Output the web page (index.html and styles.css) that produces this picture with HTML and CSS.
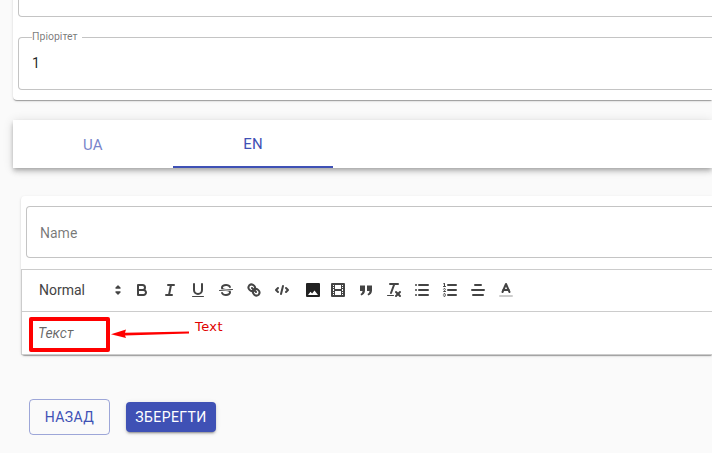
FILE: index.html
```html
<!DOCTYPE html>
<html lang="en">
<head>
  <meta charset="UTF-8" />
  <title>Edit</title>
  <link rel="stylesheet" href="styles.css">
</head>
<body>
  <main class="page">

    <section class="card top-card">
      <fieldset class="field field-cut"><legend class="no-label"></legend></fieldset>
      <fieldset class="field field-priority">
        <legend>Пріорітет</legend>
        <span class="field-value">1</span>
      </fieldset>
    </section>

    <nav class="tabs">
      <a class="tab">UA</a>
      <a class="tab active">EN</a>
    </nav>

    <section class="card editor-card">
      <div class="name-field">Name</div>

      <div class="toolbar">
        <div class="picker">
          <span>Normal</span>
          <svg class="picker-arrows" viewBox="0 0 18 18"><polygon points="7 11 9 13 11 11 7 11"/><polygon points="7 7 9 5 11 7 7 7"/></svg>
        </div>
        <button class="tool"><svg viewBox="0 0 18 18"><path class="st" d="M5,4H9.5A2.5,2.5,0,0,1,12,6.5v0A2.5,2.5,0,0,1,9.5,9H5A0,0,0,0,1,5,9V4A0,0,0,0,1,5,4Z"/><path class="st" d="M5,9h5.5A2.5,2.5,0,0,1,13,11.5v0A2.5,2.5,0,0,1,10.5,14H5a0,0,0,0,1,0,0V9A0,0,0,0,1,5,9Z"/></svg></button>
        <button class="tool"><svg viewBox="0 0 18 18"><line class="st" x1="7" x2="13" y1="4" y2="4"/><line class="st" x1="5" x2="11" y1="14" y2="14"/><line class="st" x1="8" x2="10" y1="14" y2="4"/></svg></button>
        <button class="tool"><svg viewBox="0 0 18 18"><path class="st" d="M5,3V9a4.012,4.012,0,0,0,4,4H9a4.012,4.012,0,0,0,4-4V3"/><rect class="fl" height="1" rx=".5" ry=".5" width="12" x="3" y="15"/></svg></button>
        <button class="tool"><svg viewBox="0 0 18 18"><line class="st thin" x1="15.5" x2="2.5" y1="8.5" y2="9.5"/><path class="fl" d="M9.007,8C6.542,7.791,6,7.519,6,6.5,6,5.792,7.283,5,9,5c1.571,0,2.765.679,2.969,1.309a1,1,0,0,0,1.9-.617C13.356,4.106,11.354,3,9,3,6.2,3,4,4.538,4,6.5a3.2,3.2,0,0,0,.5,1.843Z"/><path class="fl" d="M8.984,10C11.457,10.208,12,10.479,12,11.5c0,.708-1.283,1.5-3,1.5-1.571,0-2.765-.679-2.969-1.309a1,1,0,1,0-1.9.617C4.644,13.894,6.646,15,9,15c2.8,0,5-1.538,5-3.5a3.2,3.2,0,0,0-.5-1.843Z"/></svg></button>
        <button class="tool"><svg viewBox="0 0 18 18"><line class="st" x1="7" x2="11" y1="7" y2="11"/><path class="st" d="M8.9,4.577a3.476,3.476,0,0,1,.36,4.679A3.476,3.476,0,0,1,4.577,8.9C3.185,7.5,2.634,6.319,4.287,4.287,6.319,2.634,7.5,3.185,8.9,4.577Z"/><path class="st" d="M13.423,9.1a3.476,3.476,0,0,0-4.679-.36,3.476,3.476,0,0,0,.36,4.679c1.392,1.392,2.5,1.954,4.557.3C15.323,11.615,14.815,10.5,13.423,9.1Z"/></svg></button>
        <button class="tool"><svg viewBox="0 0 18 18"><polyline class="st" points="5 7 3 9 5 11"/><polyline class="st" points="13 7 15 9 13 11"/><line class="st" x1="10" x2="8" y1="5" y2="13"/></svg></button>
        <button class="tool tool-image"><svg viewBox="0 0 18 18"><path class="fl-dark" d="M3,2H15a1,1,0,0,1,1,1V15a1,1,0,0,1-1,1H3a1,1,0,0,1-1-1V3A1,1,0,0,1,3,2Z"/><path class="fl-white" d="M4,14l2.5-3.2,1.6,1.7L10.5,9.6,14,14Z"/></svg></button>
        <button class="tool tool-video"><svg viewBox="0 0 18 18"><rect class="st" height="12" width="12" x="3" y="3"/><rect class="fl" height="12" width="1" x="5" y="3"/><rect class="fl" height="12" width="1" x="12" y="3"/><rect class="fl" height="2" width="8" x="5" y="8"/><rect class="fl" height="1" width="3" x="3" y="5"/><rect class="fl" height="1" width="3" x="3" y="7"/><rect class="fl" height="1" width="3" x="3" y="10"/><rect class="fl" height="1" width="3" x="3" y="12"/><rect class="fl" height="1" width="3" x="12" y="5"/><rect class="fl" height="1" width="3" x="12" y="7"/><rect class="fl" height="1" width="3" x="12" y="10"/><rect class="fl" height="1" width="3" x="12" y="12"/></svg></button>
        <button class="tool"><svg viewBox="0 0 18 18"><path class="fl" d="M3,4.5H8V9.5C8,12,6.5,13.8,4.2,14.5L3.5,13C4.8,12.4,5.4,11.5,5.5,10H3Z"/><path class="fl" d="M10,4.5H15V9.5C15,12,13.5,13.8,11.2,14.5L10.5,13C11.8,12.4,12.4,11.5,12.5,10H10Z"/></svg></button>
        <button class="tool"><svg viewBox="0 0 18 18"><line class="st" x1="5" x2="13" y1="3" y2="3"/><line class="st" x1="6" x2="9.35" y1="12" y2="3"/><line class="st" x1="11" x2="15" y1="11" y2="15"/><line class="st" x1="15" x2="11" y1="11" y2="15"/><rect class="fl" height="1" rx="0.5" ry="0.5" width="7" x="2" y="14"/></svg></button>
        <button class="tool"><svg viewBox="0 0 18 18"><line class="st" x1="6" x2="15" y1="4" y2="4"/><line class="st" x1="6" x2="15" y1="9" y2="9"/><line class="st" x1="6" x2="15" y1="14" y2="14"/><line class="st" x1="3" x2="3" y1="4" y2="4"/><line class="st" x1="3" x2="3" y1="9" y2="9"/><line class="st" x1="3" x2="3" y1="14" y2="14"/></svg></button>
        <button class="tool"><svg viewBox="0 0 18 18"><line class="st" x1="7" x2="15" y1="4" y2="4"/><line class="st" x1="7" x2="15" y1="9" y2="9"/><line class="st" x1="7" x2="15" y1="14" y2="14"/><line class="st thin" x1="2.5" x2="4.5" y1="5.5" y2="5.5"/><path class="fl" d="M3.5,6A0.5,0.5,0,0,1,3,5.5V3.085l-0.276.138A0.5,0.5,0,0,1,2.053,3c-0.124-.247-0.023-0.324.224-0.447l1-.5A0.5,0.5,0,0,1,4,2.5v3A0.5,0.5,0,0,1,3.5,6Z"/><path class="st thin" d="M4.5,10.5h-2c0-.234,1.85-1.076,1.85-2.234A0.959,0.959,0,0,0,2.5,8.156"/><path class="st thin" d="M2.5,14.846a0.959,0.959,0,0,0,1.85-.109A0.7,0.7,0,0,0,3.75,14a0.688,0.688,0,0,0,.6-0.736,0.959,0.959,0,0,0-1.85-.109"/></svg></button>
        <button class="tool"><svg viewBox="0 0 18 18"><line class="st" x1="15" x2="3" y1="9" y2="9"/><line class="st" x1="14" x2="4" y1="14" y2="14"/><line class="st" x1="12" x2="6" y1="4" y2="4"/></svg></button>
        <button class="tool"><svg viewBox="0 0 18 18"><line class="color-label" x1="3" x2="15" y1="15" y2="15"/><polyline class="st" points="5.5 11 9 3 12.5 11"/><line class="st" x1="11.63" x2="6.38" y1="9" y2="9"/></svg></button>
      </div>

      <div class="editor-body">
        <em class="placeholder">Текст</em>
        <!-- red annotation drawn over the screenshot -->
        <div class="mark-box"></div>
        <svg class="mark-arrow" viewBox="0 0 80 10"><polygon points="1,6.2 16,1.6 15,4.8 79,3.4 79,5.6 15,7.4 16,10"/></svg>
        <span class="mark-text">Text</span>
      </div>
    </section>

    <div class="actions">
      <button class="btn btn-outline">Назад</button>
      <button class="btn btn-primary">Зберегти</button>
    </div>

  </main>
</body>
</html>
```

FILE: styles.css
```css
* {
  box-sizing: border-box;
}
html, body {
  height: 453px;
  overflow: hidden;
}
body {
  margin: 0;
  font-family: Roboto, sans-serif;
  font-size: 14px;
  background-color: #fafafa;
  color: rgba(0, 0, 0, 0.87);
}

/* Cards run out of the window on the right, so nothing closes them there */
.page {
  margin-left: 13px;
}

/* Cards */
.card {
  background-color: #fff;
  border-radius: 4px 0 0 4px;
  box-shadow: 0 2px 1px -1px rgba(0, 0, 0, 0.2), 0 1px 1px 0 rgba(0, 0, 0, 0.14), 0 1px 3px 0 rgba(0, 0, 0, 0.12);
}

/* Top card is cut by the top of the window */
.top-card {
  margin-top: -39px;
  padding: 0 0 10px 5px;
}
.field {
  margin: 0;
  padding: 0 13px;
  border: 1px solid rgba(0, 0, 0, 0.23);
  border-right: none;
  border-radius: 4px 0 0 4px;
  min-width: 0;
}
.field-cut {
  height: 56px;
  margin-bottom: 14px;
}
.no-label {
  padding: 0;
  height: 0;
}
.field-priority {
  height: 59px;
  display: block;
}
.field-priority legend {
  padding: 0 4px 0 0;
  font-size: 10.5px;
  line-height: 12px;
  color: rgba(0, 0, 0, 0.54);
}
.field-value {
  display: block;
  line-height: 16px;
  margin-top: 12px;
}

/* Tabs */
.tabs {
  display: flex;
  height: 48px;
  margin-top: 20px;
  background-color: #fff;
  box-shadow: 0 2px 4px -1px rgba(0, 0, 0, 0.2), 0 4px 5px 0 rgba(0, 0, 0, 0.14), 0 1px 10px 0 rgba(0, 0, 0, 0.12);
}
.tab {
  width: 160px;
  padding-top: 1px;
  display: flex;
  align-items: center;
  justify-content: center;
  color: #3f51b5;
  opacity: 0.7;
  font-size: 15px;
  letter-spacing: 0.2px;
}
.tab.active {
  opacity: 1;
  border-bottom: 2px solid #3f51b5;
}

/* Editor */
.editor-card {
  margin: 28px 0 0 8px;
  padding-top: 10px;
}
.name-field {
  margin-left: 5px;
  height: 52px;
  padding: 1px 0 0 13px;
  display: flex;
  align-items: center;
  border: 1px solid rgba(0, 0, 0, 0.23);
  border-right: none;
  border-radius: 4px 0 0 4px;
  color: rgba(0, 0, 0, 0.54);
}
.toolbar {
  display: flex;
  align-items: center;
  height: 43px;
  margin-top: 11px;
  padding: 0 0 1px 8px;
  border: 1px solid #ccc;
  border-right: none;
}
.picker {
  width: 98px;
  height: 24px;
  padding: 0 1px 0 9px;
  display: flex;
  align-items: center;
  justify-content: space-between;
  color: #444;
}
.picker-arrows {
  width: 18px;
  height: 18px;
  fill: #444;
  stroke: #444;
  stroke-width: 1.4;
  stroke-linejoin: round;
}
.tool {
  width: 28px;
  height: 24px;
  padding: 3px 5px;
  flex: none;
  border: none;
  background: none;
}
.tool svg {
  display: block;
  width: 18px;
  height: 18px;
}
.tool-image {
  position: relative;
  left: 3px;
}
.st {
  fill: none;
  stroke: #444;
  stroke-width: 2;
  stroke-linecap: round;
  stroke-linejoin: round;
}
.st.thin {
  stroke-width: 1;
}
.fl {
  fill: #444;
}
.fl-dark {
  fill: #222;
}
.fl-white {
  fill: #fff;
}
.color-label {
  stroke: #ccc;
  stroke-width: 2;
  stroke-linecap: round;
}
.editor-body {
  position: relative;
  height: 43px;
  padding: 13px 15px 0 16px;
  border: 1px solid #ccc;
  border-top: none;
  border-right: none;
}
.placeholder {
  display: block;
  font-size: 14px;
  line-height: 16px;
  color: rgba(0, 0, 0, 0.6);
}

/* Annotation */
.mark-box {
  position: absolute;
  left: 7px;
  top: 5px;
  width: 81px;
  height: 35px;
  border: 4px solid #f00;
  border-radius: 2px;
}
.mark-arrow {
  position: absolute;
  left: 88px;
  top: 16px;
  width: 80px;
  height: 10px;
  fill: #f00;
}
.mark-text {
  position: absolute;
  left: 173px;
  top: 7px;
  font-family: "DejaVu Sans", sans-serif;
  font-size: 13px;
  letter-spacing: 0.4px;
  line-height: 16px;
  color: #e00000;
}

/* Buttons */
.actions {
  display: flex;
  align-items: center;
  gap: 16px;
  margin: 44px 0 0 16px;
}
.btn {
  font-family: Roboto, sans-serif;
  font-size: 14px;
  letter-spacing: 0.4px;
  text-transform: uppercase;
  border-radius: 4px;
  padding: 0;
}
.btn-outline {
  width: 81px;
  height: 36px;
  color: #3f51b5;
  background: none;
  border: 1px solid rgba(63, 81, 181, 0.5);
}
.btn-primary {
  width: 90px;
  height: 30px;
  color: #fff;
  background-color: #3f51b5;
  border: none;
  box-shadow: 0 3px 1px -2px rgba(0, 0, 0, 0.2), 0 2px 2px 0 rgba(0, 0, 0, 0.14), 0 1px 5px 0 rgba(0, 0, 0, 0.12);
}
```
